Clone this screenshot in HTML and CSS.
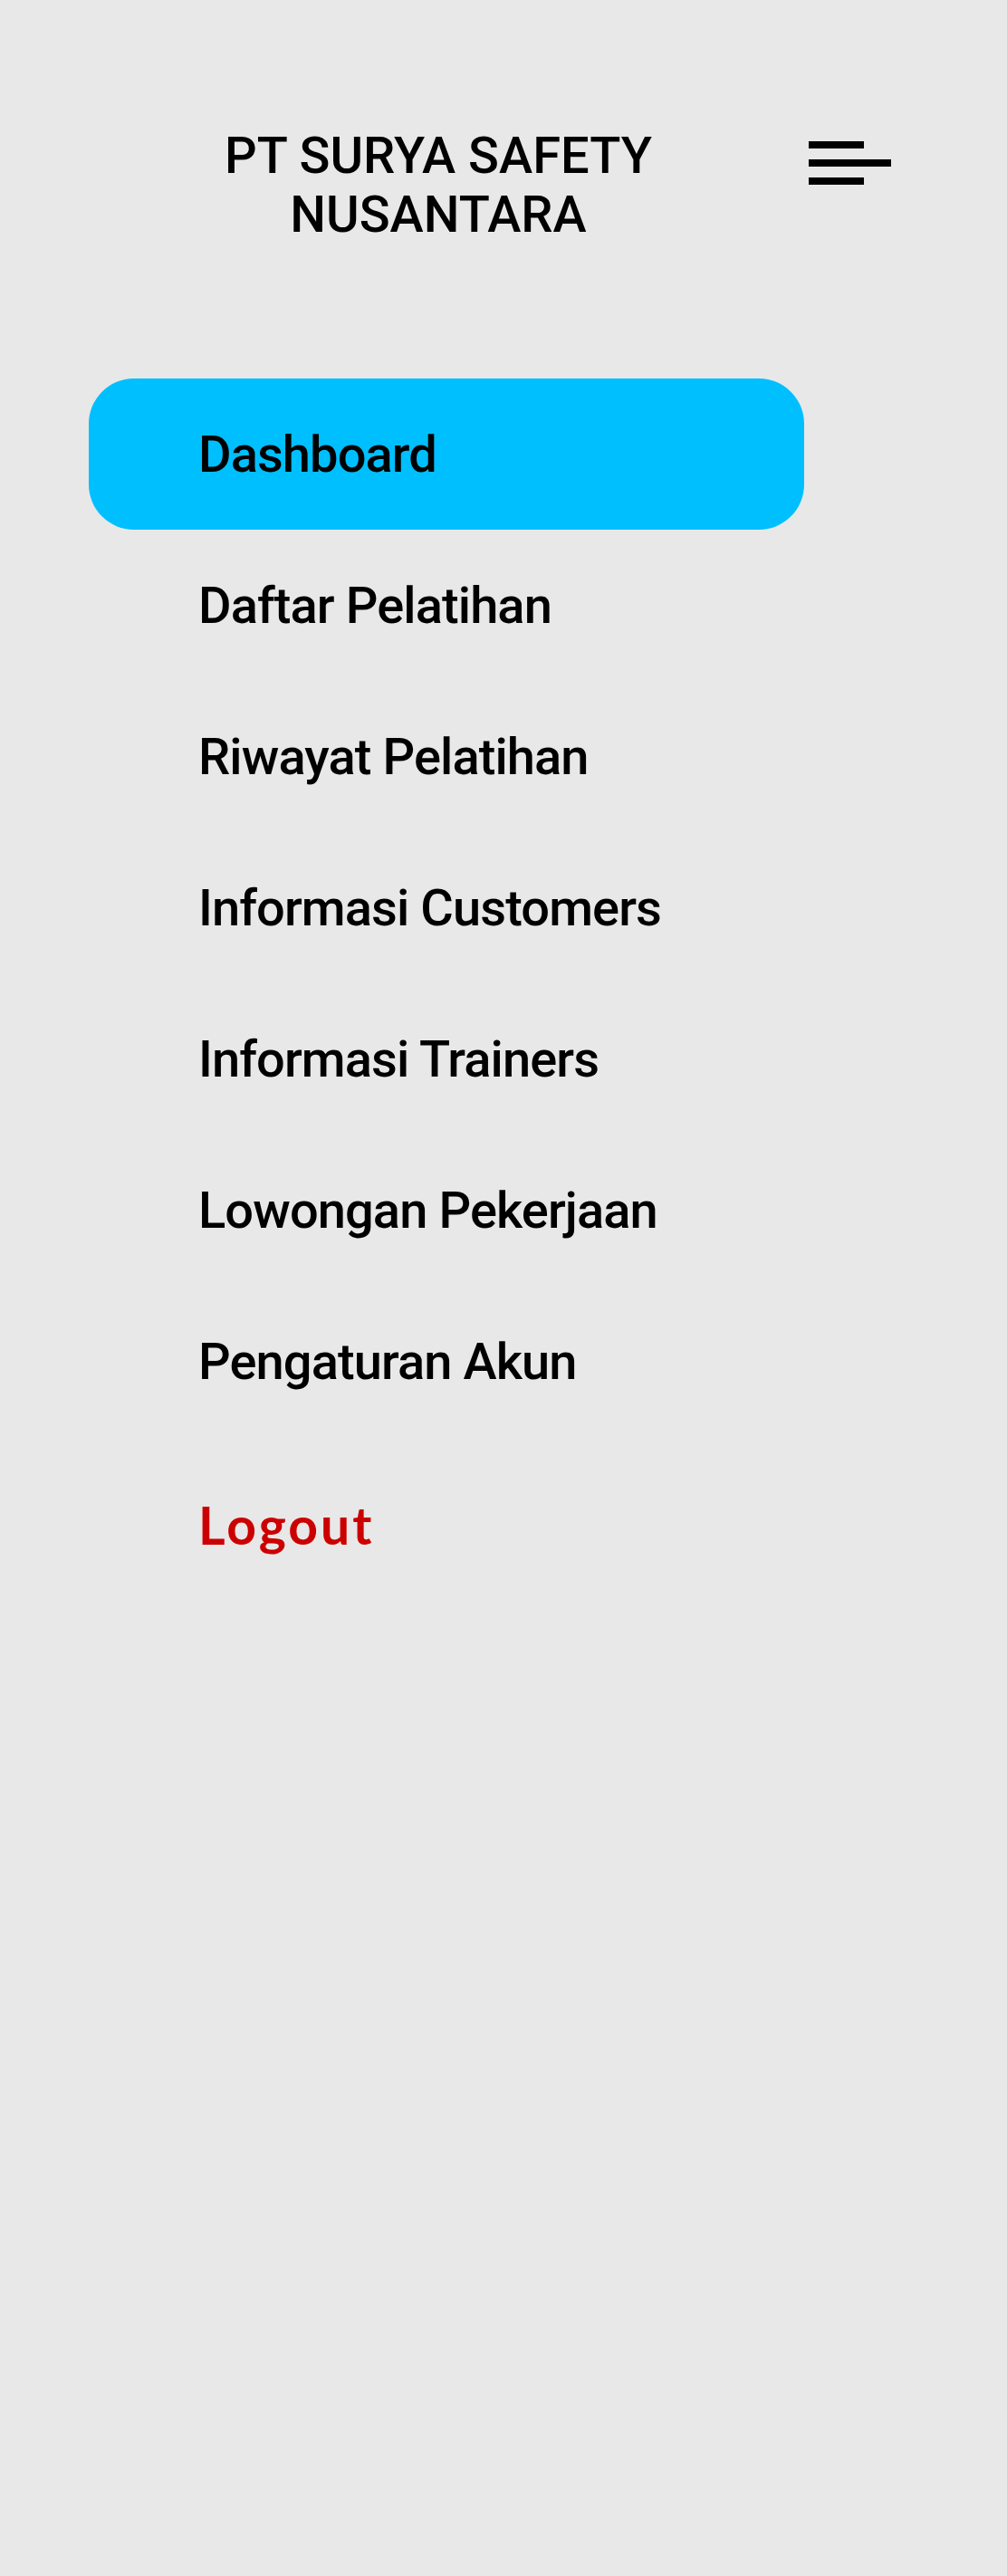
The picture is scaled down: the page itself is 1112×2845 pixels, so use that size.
FILE: index.html
```html
<!DOCTYPE html>
<html lang="id">
<head>
<meta charset="utf-8">
<title>PT Surya Safety Nusantara</title>
<link rel="stylesheet" href="styles.css">
</head>
<body>
<div class="page">
  <header class="header">
    <h1 class="title">PT SURYA SAFETY<br>NUSANTARA</h1>
    <button class="menu-btn" aria-label="Menu">
      <span class="bar bar-short"></span>
      <span class="bar bar-long"></span>
      <span class="bar bar-short"></span>
    </button>
  </header>
  <nav class="nav">
    <a class="nav-item active" href="#">Dashboard</a>
    <a class="nav-item" href="#">Daftar Pelatihan</a>
    <a class="nav-item" href="#">Riwayat Pelatihan</a>
    <a class="nav-item" href="#">Informasi Customers</a>
    <a class="nav-item" href="#">Informasi Trainers</a>
    <a class="nav-item" href="#">Lowongan Pekerjaan</a>
    <a class="nav-item" href="#">Pengaturan Akun</a>
    <a class="logout" href="#">Logout</a>
  </nav>
</div>
</body>
</html>
```

FILE: styles.css
```css
* { box-sizing: border-box; }
html, body {
  margin: 0;
  padding: 0;
  background: #e8e8e8;
}
body {
  font-family: Roboto, "Liberation Sans", sans-serif;
  color: #000;
  min-height: 2845px;
}
.page {
  width: 1112px;
}
.header {
  display: flex;
  align-items: flex-start;
  padding: 140px 0 0 98px;
}
.title {
  width: 772px;
  margin: 0;
  font-size: 56px;
  line-height: 65px;
  font-weight: 500;
  text-align: center;
  letter-spacing: 0;
}
.menu-btn {
  margin: 16px 0 0 23px;
  padding: 0;
  border: 0;
  background: none;
  display: flex;
  flex-direction: column;
  gap: 12px;
  width: 91px;
}
.bar {
  display: block;
  height: 8px;
  background: #000;
}
.bar-short { width: 61px; }
.bar-long { width: 91px; }
.nav {
  margin: 148px 0 0 98px;
  width: 790px;
  display: flex;
  flex-direction: column;
}
.nav-item {
  display: flex;
  align-items: center;
  height: 167px;
  padding-left: 121px;
  font-size: 56px;
  font-weight: 500;
  letter-spacing: -0.9px;
  color: #000;
  text-decoration: none;
  border-radius: 50px;
}
.nav-item.active {
  background: #00bfff;
}
.logout {
  display: block;
  margin-top: 62px;
  padding-left: 121px;
  font-family: Lato, "Noto Sans", sans-serif;
  font-weight: 700;
  font-size: 57px;
  line-height: 70px;
  letter-spacing: 3px;
  color: #cc0000;
  text-decoration: none;
}
```
